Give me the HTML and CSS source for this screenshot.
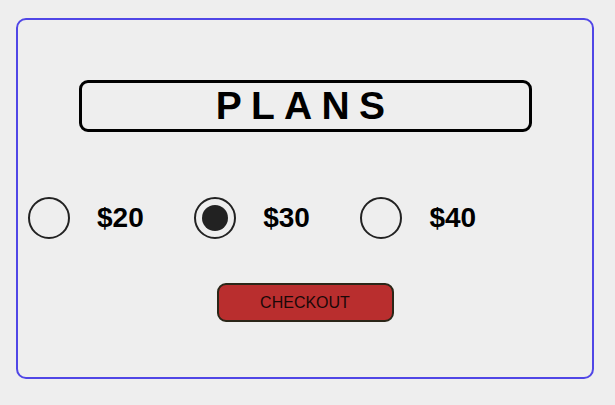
FILE: index.html
```html
<!DOCTYPE html>
<html lang="en">
  <head>
    <meta charset="UTF-8" />
    <meta name="viewport" content="width=device-width, initial-scale=1.0" />
    <title>Plans</title>
    <link rel="stylesheet" href="styles.css">
  </head>
  <body>
    <div class="plans">
      <h1 class="plans__title">PLANS</h1>
      <div class="plans__options">
        <label class="plans__option">
          <input type="radio" name="plan" value="20" />
          <span class="plans__dot"></span>
          <span class="plans__price">$20</span>
        </label>
        <label class="plans__option">
          <input type="radio" name="plan" value="30" checked />
          <span class="plans__dot"></span>
          <span class="plans__price">$30</span>
        </label>
        <label class="plans__option">
          <input type="radio" name="plan" value="40" />
          <span class="plans__dot"></span>
          <span class="plans__price">$40</span>
        </label>
      </div>
      <button class="plans__btn">CHECKOUT</button>
    </div>
  </body>
</html>
```

FILE: styles.css
```css
*,
*::before,
*::after {
  box-sizing: border-box;
  padding: 0;
  margin: 0;
}

:root {
  --bg: #eeeeee;
  --violet: #5046e6;
  --ink: #222222;
  --red: #b92e2e;
}
body {
  background-color: var(--bg);
  font-family: "Liberation Sans", Arial, sans-serif;
  padding: 18px 21px 0 16px;
}
.plans {
  display: flex;
  flex-direction: column;
  align-items: center;
  height: 361px;
  border: 2px solid var(--violet);
  border-radius: 10px;
  padding-top: 60px;
}
.plans__title {
  width: 453px;
  border: 3px solid #000;
  border-radius: 9px;
  font-size: 39px;
  font-weight: bold;
  line-height: 46px;
  letter-spacing: 9.25px;
  padding-left: 0;
  text-align: center;
  color: #000;
}
.plans__options {
  align-self: stretch;
  display: flex;
  gap: 50.5px;
  margin-top: 65px;
  padding-left: 10px;
}
.plans__option {
  display: flex;
  align-items: center;
  gap: 27px;
  cursor: pointer;
}
.plans__option input {
  display: none;
}
.plans__dot {
  width: 42px;
  height: 42px;
  border: 2px solid var(--ink);
  border-radius: 50%;
  display: flex;
  align-items: center;
  justify-content: center;
}
.plans__option input:checked + .plans__dot::after {
  content: "";
  width: 26px;
  height: 26px;
  border-radius: 50%;
  background-color: var(--ink);
}
.plans__price {
  font-size: 28px;
  font-weight: bold;
  color: #000;
}
.plans__btn {
  margin-top: 44px;
  width: 177px;
  height: 39px;
  background-color: var(--red);
  border: 2px solid #2a2618;
  border-radius: 9px;
  font-family: inherit;
  font-size: 16px;
  color: #1a0808;
  cursor: pointer;
}
```
